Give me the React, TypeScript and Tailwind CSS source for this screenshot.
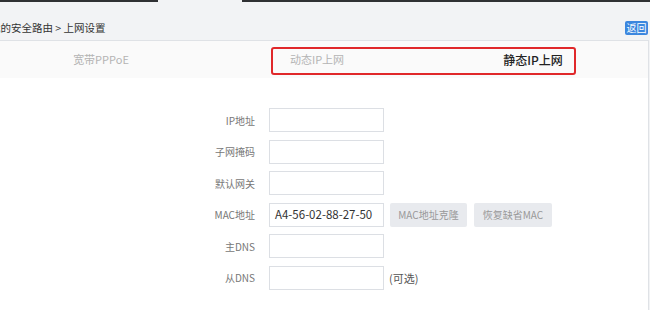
import React from 'react';

const FONT = { fontFamily: '"Noto Sans CJK SC", "Noto Sans", sans-serif' };

const rows = [
  { label: 'IP地址' },
  { label: '子网掩码' },
  { label: '默认网关' },
  { label: 'MAC地址', value: 'A4-56-02-88-27-50', mac: true },
  { label: '主DNS' },
  { label: '从DNS', hint: '(可选)' },
];

export default function App() {
  return (
    <div className="relative w-[650px] h-[310px] overflow-hidden bg-[#f2f3f5]" style={FONT}>
      {/* top strip */}
      <div className="flex h-[2px]">
        <div className="w-[158px] bg-[#2f3133]" />
        <div className="w-[84px]" />
        <div className="flex-1 bg-[#2f3133]" />
      </div>

      {/* breadcrumb */}
      <div className="flex h-[38px] items-center justify-between pt-[14px] pr-[2px]">
        <span className="-ml-[10px] text-[10.5px] leading-none text-[#333]">我的安全路由 &gt; 上网设置</span>
        <button className="h-[14px] w-[23px] rounded-[2px] bg-[#3b86de] text-[10px] leading-none text-white">返回</button>
      </div>

      {/* panel */}
      <div className="h-[270px] w-[649px] border-t border-r border-[#dfe2e6] bg-white">
        <div className="flex h-[37px] -ml-[7px] bg-[#fafafa]">
          <div className="flex w-[216px] items-center justify-center text-[11px] text-[#b4b4b4]">宽带PPPoE</div>
          <div className="flex w-[216px] items-center justify-center text-[11px] text-[#b4b4b4]">动态IP上网</div>
          <div className="flex w-[216px] items-center justify-center text-[12px] font-medium text-[#222]">静态IP上网</div>
        </div>

        <div className="flex flex-col gap-[7.6px] pt-[30px]">
          {rows.map((r) => (
            <div key={r.label} className="flex h-[24px] items-center">
              <div className="w-[255px] text-right text-[10px] text-[#777]">{r.label}</div>
              <div className="ml-[14px] flex h-[24px] w-[115px] items-center overflow-hidden whitespace-nowrap border border-[#dcdfe4] pl-[5px] text-[11.5px] text-[#333]">
                {r.value}
              </div>
              {r.mac && (
                <div className="ml-[6px] flex gap-[7px]">
                  <button className="h-[24px] w-[77px] rounded-[2px] bg-[#e8eaee] text-[10px] text-[#999]">MAC地址克隆</button>
                  <button className="h-[24px] w-[78px] rounded-[2px] bg-[#e8eaee] text-[10px] text-[#999]">恢复缺省MAC</button>
                </div>
              )}
              {r.hint && <span className="ml-[5px] text-[11px] text-[#555]">{r.hint}</span>}
            </div>
          ))}
        </div>
      </div>

      {/* red highlight annotation */}
      <div className="absolute left-[271px] top-[47px] h-[28px] w-[305px] rounded-[3px] border-2 border-[#e0282a]" />
    </div>
  );
}
